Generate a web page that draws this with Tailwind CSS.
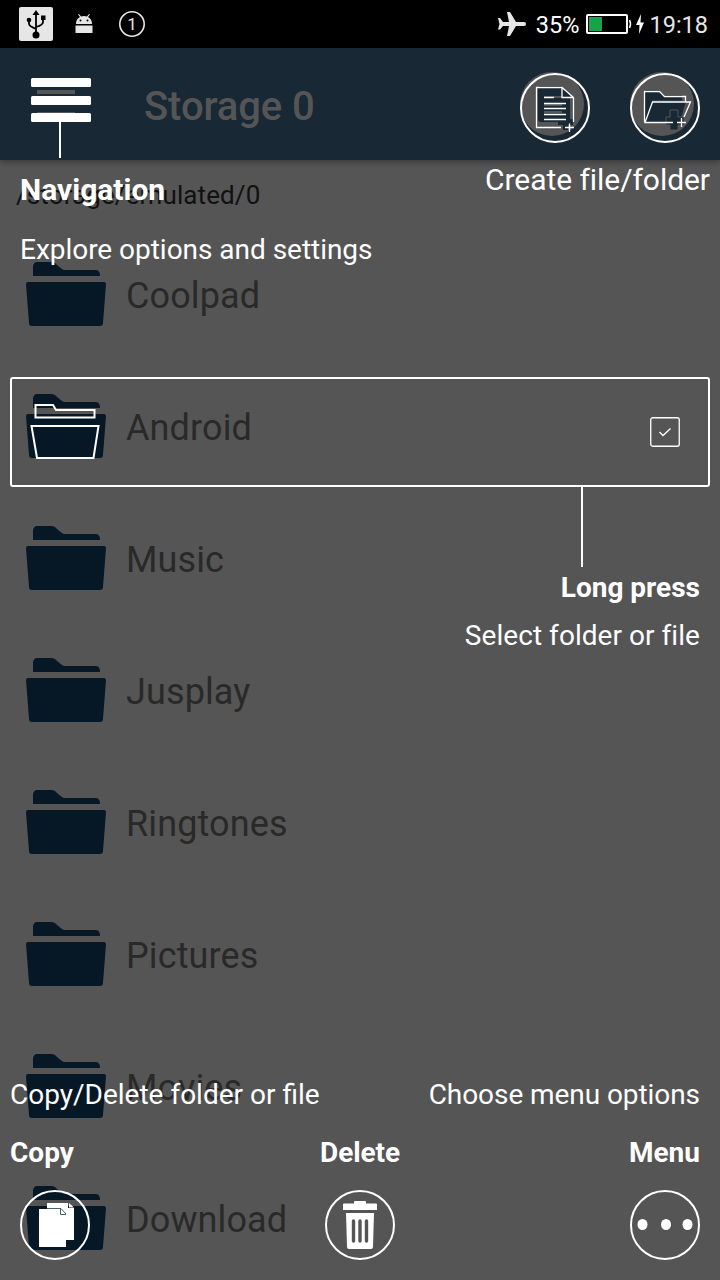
<!DOCTYPE html>
<html lang="en">
<head>
<meta charset="utf-8">
<title>Storage 0</title>
<script src="https://cdn.jsdelivr.net/npm/@tailwindcss/browser@4"></script>
</head>
<body class="bg-[#555555]">
<svg class="hidden">
  <symbol id="folder" viewBox="0 0 80 64">
    <path d="M7 14V4Q8 0 11 0H25Q29 0 31 3L36 7Q37 8 39 8H70Q74 8 74 14Z"/>
    <path d="M2 20H78Q80 20 80 22L77 61Q77 64 74 64H6Q3 64 3 61L0 22Q0 20 2 20Z"/>
  </symbol>
</svg>
<div class="relative w-[720px] h-[1280px] overflow-hidden bg-[#555555] font-['Roboto',sans-serif]">

  <!-- status bar -->
  <div class="h-12 bg-black flex items-center justify-between text-[#e6e6e6]">
    <svg class="w-[160px] h-12" viewBox="0 0 160 48">
      <rect x="19" y="7" width="34" height="34" rx="2" fill="#e6e6e6"/>
      <g stroke="#000" stroke-width="1.8" fill="none">
        <path d="M36 13V35M29 20V24Q29 26 36 29M43 18V22Q43 25 36 27"/>
      </g>
      <path d="M36 10L39.500 15H32.500Z"/><circle cx="36" cy="35" r="3.500"/><circle cx="29" cy="20" r="2.300"/><rect x="41" y="15.500" width="4.500" height="4.500"/>
      <g fill="#e6e6e6">
        <path d="M76 24Q76 19 80 17L78 14.500L79 14L81 16.500Q84 15.500 87 16.500L89 14L90 14.500L88 17Q92 19 92 24Z"/>
        <rect x="75.500" y="25.500" width="17" height="7.500"/>
      </g>
      <circle cx="80.500" cy="20.500" r="1"/><circle cx="87.500" cy="20.500" r="1"/>
      <circle cx="132" cy="24" r="12.200" fill="none" stroke="#e6e6e6" stroke-width="1.600"/>
      <text x="132" y="30" text-anchor="middle" font-family="Roboto" font-size="17" fill="#e6e6e6">1</text>
    </svg>
    <div class="flex items-center h-12 pr-3 text-[23.5px] leading-[30px]">
      <svg class="w-7 h-6 mr-[10px]" viewBox="0 0 28 24" fill="#e6e6e6"><path d="M0 6H2L5 10H11L9 0H12L18 10H26Q28 10 28 12Q28 14 26 14H18L12 24H9L11 14H5L2 17.500H0L1.500 12Z"/></svg>
      <span class="text-white pt-0.5">35%</span>
      <svg class="w-[60px] h-6 ml-[6px] mr-[4px]" viewBox="0 0 60 24">
        <rect x="2" y="3" width="40" height="18" rx="1" fill="none" stroke="#fff" stroke-width="2"/>
        <rect x="4" y="5" width="13" height="14" fill="#16a349"/>
        <path d="M44.500 8Q46.500 12 44.500 16" fill="none" stroke="#fff" stroke-width="1.500"/>
        <path d="M56 2L51 13H54.500L54 22L59 10.500H55.500Z" fill="#fff"/>
      </svg>
      <span class="pt-0.5">19:18</span>
    </div>
  </div>

  <!-- toolbar -->
  <div class="relative h-28 bg-[#192835] flex items-center justify-between shadow-[0_2px_6px_rgba(0,0,0,0.35)]">
    <div class="flex items-center">
      <svg class="w-[38px] h-[30px] ml-[37px] mr-[69px]" viewBox="0 0 38 30" fill="#555555"><path d="M0 1h38v4H0zM0 12h38v4H0zM0 23h38v4H0z"/></svg>
      <span class="text-[40px] leading-[48px] font-medium text-[#555555] pt-[5px] tracking-[-0.1px]">Storage 0</span>
    </div>
    <div class="flex gap-[46px] pr-[26px]">
      <svg class="w-16 h-16" viewBox="0 0 64 64"><circle cx="32" cy="32" r="32" fill="#555555"/>
        <path d="M18 17Q18 14 21 14H41L50 23V50H21Q18 50 18 47Z" fill="#192835"/>
        <path d="M24 25H42M24 33H42M24 40H42" stroke="#555555" stroke-width="2"/>
        <path d="M43 42H48V47H53V53H48V58H43V53H38V47H43Z" fill="#192835"/>
      </svg>
      <svg class="w-16 h-16" viewBox="0 0 64 64"><circle cx="32" cy="32" r="32" fill="#555555"/>
        <path d="M15 18H29L34 23H52V29H56L50 50H15Z" fill="#192835"/>
        <path d="M22 29H54" stroke="#555555" stroke-width="1"/>
        <path d="M40 38H48V45H54V53H48V58H40V53H36V45H40Z" fill="#192835" stroke="#555555"/>
      </svg>
    </div>
  </div>

  <!-- path and folder list -->
  <div class="h-[68px] pl-4 pt-[19px] text-[26px] leading-[32px] tracking-[0.1px] text-[#111111]">/storage/emulated/0</div>
  <div class="text-[36px] leading-[44px] tracking-[0.12px] text-[#292929] fill-[#061825]">
    <div class="h-[132px] flex items-center pl-[26px] gap-5"><svg class="w-20 h-16"><use href="#folder"/></svg><span class="pt-1">Coolpad</span></div>
    <div class="h-[132px] flex items-center pl-[26px] gap-5"><svg class="w-20 h-16"><use href="#folder"/></svg><span class="pt-1">Android</span></div>
    <div class="h-[132px] flex items-center pl-[26px] gap-5"><svg class="w-20 h-16"><use href="#folder"/></svg><span class="pt-1">Music</span></div>
    <div class="h-[132px] flex items-center pl-[26px] gap-5"><svg class="w-20 h-16"><use href="#folder"/></svg><span class="pt-1">Jusplay</span></div>
    <div class="h-[132px] flex items-center pl-[26px] gap-5"><svg class="w-20 h-16"><use href="#folder"/></svg><span class="pt-1">Ringtones</span></div>
    <div class="h-[132px] flex items-center pl-[26px] gap-5"><svg class="w-20 h-16"><use href="#folder"/></svg><span class="pt-1">Pictures</span></div>
    <div class="h-[132px] flex items-center pl-[26px] gap-5"><svg class="w-20 h-16"><use href="#folder"/></svg><span class="pt-1">Movies</span></div>
    <div class="h-[132px] flex items-center pl-[26px] gap-5"><svg class="w-20 h-16"><use href="#folder"/></svg><span class="pt-1">Download</span></div>
  </div>

  <!-- help overlay -->
  <div class="absolute inset-0 pt-12 text-white text-[28px] leading-[32px] flex flex-col">
    <div class="h-[329px] flex justify-between">
      <div class="pl-5">
        <svg class="w-20 h-[126px]" viewBox="0 0 80 126" fill="#fff"><rect x="11" y="30" width="60" height="9" rx="1.500"/><rect x="11" y="48" width="60" height="9" rx="1.500"/><rect x="11" y="65" width="60" height="9" rx="1.500"/><rect x="39" y="74" width="2" height="36"/></svg>
        <div class="font-bold text-[30px]">Navigation</div>
        <div class="mt-[28px] tracking-[-0.03px]">Explore options and settings</div>
      </div>
      <div class="pt-[25px] pr-[10px] flex flex-col items-end">
        <div class="flex gap-10 pr-[10px]">
          <svg class="w-[70px] h-[70px]" viewBox="0 0 70 70" fill="none" stroke="#fff"><circle cx="35" cy="35" r="34" stroke-width="2"/>
            <path d="M41 54.500H16.500V14.500H42L53.500 24.500V49M42 14.500V24.500H53.500M24 24.500H34M24 30.500H46M24 35.500H46M24 41.500H46M24 46.500H46M49.500 50.500V59M45 54.500H54" stroke-width="1.300"/></svg>
          <svg class="w-[70px] h-[70px]" viewBox="0 0 70 70" fill="none" stroke="#fff"><circle cx="35" cy="35" r="34" stroke-width="2"/>
            <path d="M43 49.500H15L22.500 29H60.500L54 44M14.500 49V18.500H29.500L34.500 23.500H55.500V29M51.500 45V54M47 49.500H56" stroke-width="1.300"/></svg>
        </div>
        <div class="mt-[19px] text-[30px] leading-[36px] tracking-[-0.05px]">Create file/folder</div>
      </div>
    </div>

    <div class="mx-[10px] h-[110px] border-2 border-white rounded-[3px] flex justify-between items-center pl-[18px] pr-7">
      <svg class="w-[70px] h-[58px]" viewBox="0 0 70 58" fill="none" stroke="#fff" stroke-width="2"><path d="M5.500 2H23L26 7H64.500V14.500H5.500ZM1.500 23H68.500L63.500 55H7Z"/></svg>
      <svg class="w-[30px] h-[30px]" viewBox="0 0 30 30" fill="none" stroke="#fff"><rect x=".75" y=".75" width="28.500" height="28.500" rx="2" stroke-width="1.300"/><path d="M9.500 15L13 18.500L20.500 11.500" stroke-width="1.300"/></svg>
    </div>
    <div class="pr-5 flex flex-col items-end">
      <div class="w-0.5 h-20 bg-white mr-[117px]"></div>
      <div class="mt-[5px] font-bold">Long press</div>
      <div class="mt-4 tracking-[0.05px]">Select folder or file</div>
    </div>

    <div class="mt-auto h-[201px] pl-[10px] pr-5">
      <div class="flex justify-between"><span>Copy/Delete folder or file</span><span class="tracking-[-0.07px]">Choose menu options</span></div>
      <div class="mt-[26px] grid grid-cols-[1fr_auto_1fr] font-bold"><span>Copy</span><span class="pl-[10px] tracking-[-0.1px]">Delete</span><span class="text-right">Menu</span></div>
      <div class="mt-[21px] pl-[10px] flex justify-between">
        <svg class="w-[70px] h-[70px]" viewBox="0 0 70 70"><circle cx="35" cy="35" r="34" fill="none" stroke="#fff" stroke-width="2"/>
          <path d="M27 13H48V18H54V50H27Z" fill="#fff"/><path d="M49 13L54 17.500H49Z" fill="#fff"/>
          <path d="M19 19H40V25H46V57H19Z" fill="#fff"/><path d="M27 18.500H41L46 24M40.500 19V24.500H46" fill="none" stroke="#4b6268" stroke-width="1"/></svg>
        <svg class="w-[70px] h-[70px]" viewBox="0 0 70 70"><circle cx="35" cy="35" r="34" fill="none" stroke="#fff" stroke-width="2"/>
          <path d="M18 20V14.500Q18 13.500 19 13.500H29V12Q29 11 30 11H40Q41 11 41 12V13.500H51Q52 13.500 52 14.500V20ZM21 23H49L48 57Q48 59 46 59H24Q22 59 22 57Z" fill="#fff"/>
          <path d="M28.500 31V51M35 31V51M41.500 31V51" stroke="#555555" stroke-width="3.400" stroke-linecap="round"/></svg>
        <svg class="w-[70px] h-[70px]" viewBox="0 0 70 70"><circle cx="35" cy="35" r="34" fill="none" stroke="#fff" stroke-width="2"/>
          <g fill="#fff"><ellipse cx="12.500" cy="34.500" rx="5" ry="5.500"/><ellipse cx="36" cy="34.500" rx="5" ry="5.500"/><ellipse cx="57.500" cy="34.500" rx="5" ry="5.500"/></g></svg>
      </div>
    </div>
  </div>
</div>
</body>
</html>
